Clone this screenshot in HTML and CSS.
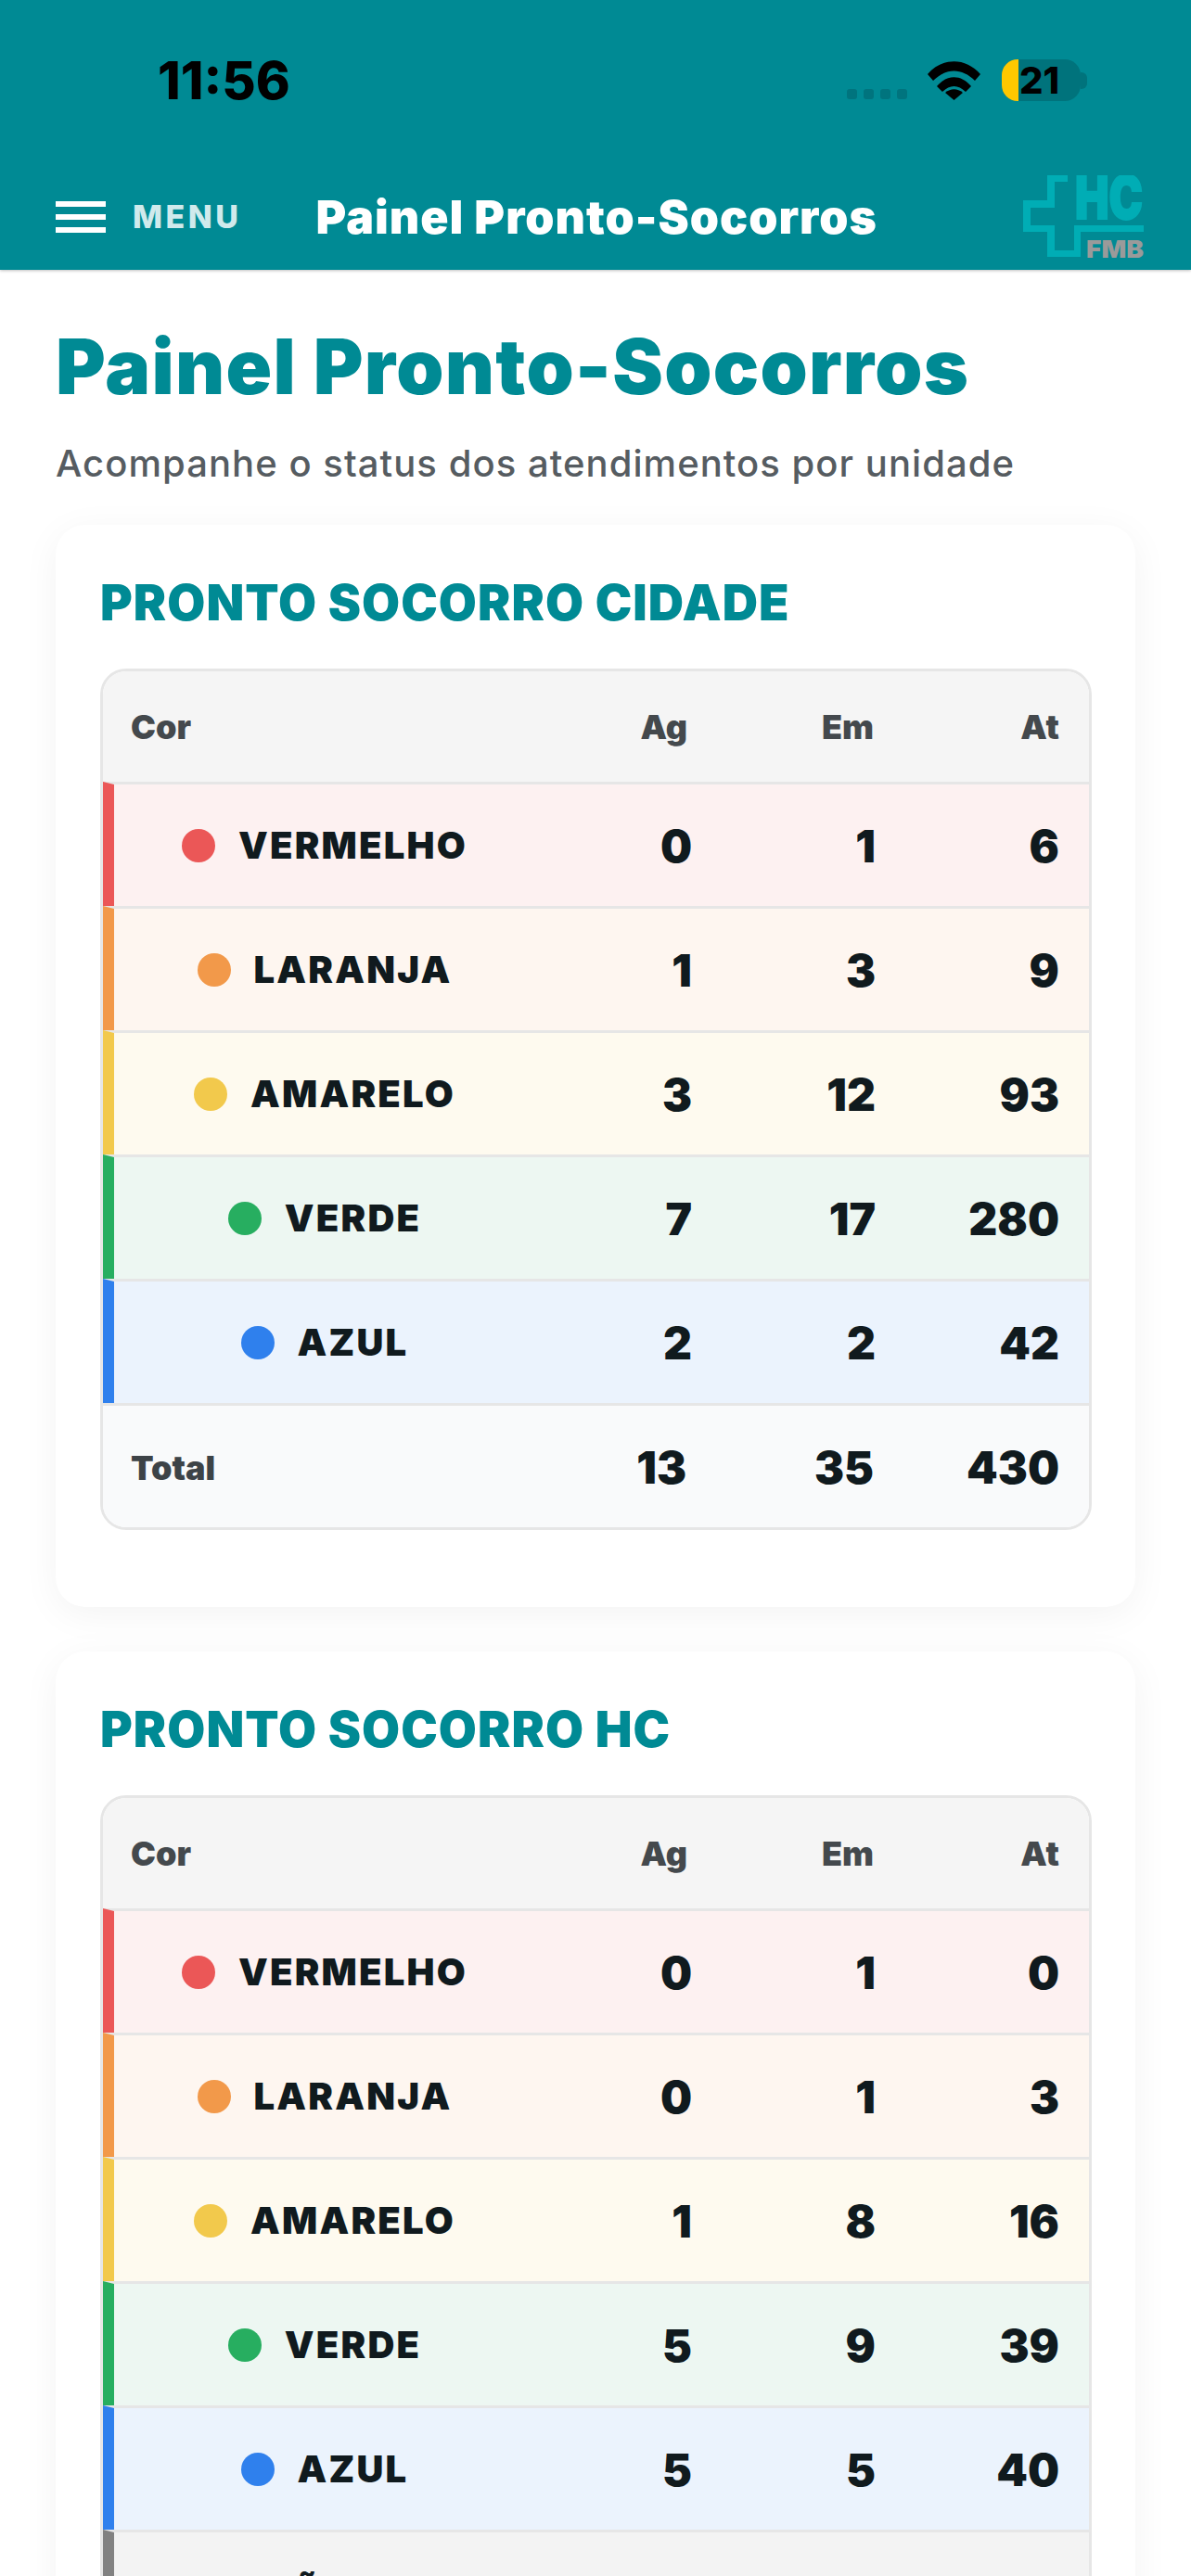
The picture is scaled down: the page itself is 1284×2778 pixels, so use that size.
FILE: index.html
```html
<!DOCTYPE html>
<html lang="pt-BR">
<head>
    <meta charset="UTF-8">
    <meta name="viewport" content="width=device-width, initial-scale=1.0">
    <title>Painel Pronto-Socorros</title>
    <link rel="stylesheet" href="styles.css">
</head>
<body>
    <header class="topo">
        <div class="status">
            <span class="hora">11:56</span>
            <div class="status-icones">
                <div class="sinal"><i></i><i></i><i></i><i></i></div>
                <svg class="wifi" viewBox="0 0 57 42" width="57" height="42">
                    <path d="M0 14C16-4.5 41-4.5 57 14L51 21C37 7 20 7 6 21Z"/>
                    <path d="M10 27C21 14 36 14 47 27L41 33C33 25 24 25 16 33Z"/>
                    <path d="M19 34C25 29 32 29 38 34L28.5 42Z"/>
                </svg>
                <div class="bateria"><span class="carga"></span><span class="nivel">21</span></div>
                <span class="bateria-ponta"></span>
            </div>
        </div>
        <nav class="barra">
            <div class="hamburguer"><i></i><i></i><i></i></div>
            <span class="menu">MENU</span>
            <span class="barra-titulo">Painel Pronto-Socorros</span>
            <svg class="logo" viewBox="0 0 130 90" width="130" height="90">
                <polygon class="logo-cruz" points="48,0 26,0 26,27 0,27 0,61 26,61 26,88 62,88 62,61 130,61 130,54 55,54 55,81 34,81 34,54 8,54 8,35 34,35 34,7 48,7"/>
                <text class="logo-hc" x="56" y="47" textLength="73" lengthAdjust="spacingAndGlyphs">HC</text>
                <text class="logo-fmb" x="68" y="89" textLength="62" lengthAdjust="spacingAndGlyphs">FMB</text>
            </svg>
        </nav>
    </header>

    <main class="conteudo">
        <h1>Painel Pronto-Socorros</h1>
        <p class="subtitulo">Acompanhe o status dos atendimentos por unidade</p>

        <section class="card">
            <h2>PRONTO SOCORRO CIDADE</h2>
            <div class="tabela">
                <table>
                    <thead>
                        <tr><th>Cor</th><th>Ag</th><th>Em</th><th>At</th></tr>
                    </thead>
                    <tbody>
                        <tr class="vermelho"><td><span class="cor"><i></i>VERMELHO</span></td><td>0</td><td>1</td><td>6</td></tr>
                        <tr class="laranja"><td><span class="cor"><i></i>LARANJA</span></td><td>1</td><td>3</td><td>9</td></tr>
                        <tr class="amarelo"><td><span class="cor"><i></i>AMARELO</span></td><td>3</td><td>12</td><td>93</td></tr>
                        <tr class="verde"><td><span class="cor"><i></i>VERDE</span></td><td>7</td><td>17</td><td>280</td></tr>
                        <tr class="azul"><td><span class="cor"><i></i>AZUL</span></td><td>2</td><td>2</td><td>42</td></tr>
                        <tr class="total"><td>Total</td><td>13</td><td>35</td><td>430</td></tr>
                    </tbody>
                </table>
            </div>
        </section>

        <section class="card">
            <h2>PRONTO SOCORRO HC</h2>
            <div class="tabela">
                <table>
                    <thead>
                        <tr><th>Cor</th><th>Ag</th><th>Em</th><th>At</th></tr>
                    </thead>
                    <tbody>
                        <tr class="vermelho"><td><span class="cor"><i></i>VERMELHO</span></td><td>0</td><td>1</td><td>0</td></tr>
                        <tr class="laranja"><td><span class="cor"><i></i>LARANJA</span></td><td>0</td><td>1</td><td>3</td></tr>
                        <tr class="amarelo"><td><span class="cor"><i></i>AMARELO</span></td><td>1</td><td>8</td><td>16</td></tr>
                        <tr class="verde"><td><span class="cor"><i></i>VERDE</span></td><td>5</td><td>9</td><td>39</td></tr>
                        <tr class="azul"><td><span class="cor"><i></i>AZUL</span></td><td>5</td><td>5</td><td>40</td></tr>
                        <tr class="cinza"><td><span class="cor"><i></i>NÃO INF.</span></td><td>0</td><td>0</td><td>0</td></tr>
                    </tbody>
                </table>
            </div>
        </section>
    </main>
</body>
</html>
```

FILE: styles.css
```css
html, body {
    margin: 0;
    padding: 0;
    height: 2778px;
    overflow: hidden;
}
body {
    font-family: 'Inter', 'Liberation Sans', sans-serif;
    background-color: #fff;
    color: #101a1e;
}

/* topo */
.topo {
    background-color: #008a94;
    height: 291px;
    box-shadow: 0 1px 3px rgba(0, 0, 0, 0.25);
}
.status {
    height: 176px;
    display: flex;
    align-items: center;
    justify-content: space-between;
    padding: 0 112px 0 170px;
}
.hora {
    font-size: 56px;
    font-weight: 800;
    color: #000;
    line-height: 1;
    margin-top: -3px;
}
.status-icones {
    display: flex;
    align-items: flex-end;
    margin-top: -4px;
}
.sinal {
    display: flex;
    gap: 7px;
    margin-right: 22px;
    padding-bottom: 2px;
}
.sinal i {
    width: 11px;
    height: 11px;
    border-radius: 3px;
    background-color: #00747e;
}
.wifi {
    margin-right: 23px;
    margin-bottom: 1px;
}
.bateria {
    width: 85px;
    height: 45px;
    border-radius: 17px;
    background-color: #00737c;
    overflow: hidden;
    display: flex;
    align-items: center;
}
.carga {
    width: 18px;
    height: 100%;
    background-color: #ffc800;
}
.nivel {
    font-size: 40px;
    font-weight: 800;
    color: #000;
    margin-left: 1px;
}
.bateria-ponta {
    width: 7px;
    height: 18px;
    margin-bottom: 13px;
    border-radius: 0 6px 6px 0;
    background-color: #00737c;
}
.barra {
    height: 115px;
    display: flex;
    align-items: center;
    padding: 0 51px 0 60px;
}
.hamburguer {
    display: flex;
    flex-direction: column;
    gap: 8px;
    width: 54px;
}
.hamburguer i {
    height: 6px;
    background-color: #fff;
}
.menu {
    margin-left: 29px;
    font-size: 34px;
    font-weight: 800;
    letter-spacing: 3.5px;
    color: #d0eaec;
}
.barra-titulo {
    margin-left: 80px;
    font-size: 50px;
    font-weight: 900;
    letter-spacing: 1px;
    color: #fff;
}
.logo {
    margin-left: auto;
}
.logo-cruz {
    fill: #00adb5;
}
.logo-hc {
    font-size: 64px;
    font-weight: 900;
    fill: #00adb5;
    stroke: #00adb5;
    stroke-width: 2px;
}
.logo-fmb {
    font-size: 26px;
    font-weight: 900;
    fill: #9a9a9a;
}

/* conteudo */
.conteudo {
    padding: 57px 60px 0;
}
h1 {
    margin: 0 0 30px;
    font-size: 82px;
    line-height: 96px;
    font-weight: 900;
    letter-spacing: 1.3px;
    color: #008a94;
}
.subtitulo {
    margin: 0 0 40px;
    font-size: 40px;
    line-height: 52px;
    font-weight: 500;
    letter-spacing: 1.05px;
    color: #565c61;
}
.card {
    background-color: #fff;
    border-radius: 32px;
    box-shadow: 0 8px 40px rgba(0, 0, 0, 0.05);
    padding: 52px 47px 83px 48px;
    margin-bottom: 48px;
}
h2 {
    margin: 0 0 39px;
    font-size: 53px;
    line-height: 64px;
    font-weight: 900;
    letter-spacing: 1.05px;
    color: #008a94;
}

/* tabela */
.tabela {
    border: 3px solid #e6e6e6;
    border-radius: 28px;
    overflow: hidden;
}
table {
    width: 100%;
    table-layout: fixed;
    border-collapse: separate;
    border-spacing: 0;
}
th, td {
    box-sizing: border-box;
    padding: 0 32px 0 0;
    text-align: right;
}
th:first-child, td:first-child {
    width: 466px;
    padding: 0 0 0 30px;
    text-align: left;
}
th:nth-child(2), td:nth-child(2) {
    width: 195px;
}
th:nth-child(3), td:nth-child(3) {
    width: 202px;
}
th:nth-child(2) {
    padding-right: 31px;
}
th {
    height: 119px;
    background-color: #f5f5f5;
    font-size: 36px;
    font-weight: 900;
    color: #44494d;
}
td {
    height: 134px;
    padding-top: 2px;
    border-top: 3px solid #e6e6e6;
    font-size: 48px;
    font-weight: 900;
}
tbody td:first-child {
    border-left: 12px solid #828282;
    padding: 2px 0 0 0;
    text-align: center;
}
tbody td:nth-child(2) {
    padding-right: 26px;
}
tbody td:nth-child(3) {
    padding-right: 30px;
}
.cor {
    display: inline-flex;
    align-items: center;
    gap: 25px;
    font-size: 40px;
    letter-spacing: 2.2px;
    line-height: 1;
}
.cor i {
    width: 36px;
    height: 36px;
    border-radius: 50%;
    background-color: #828282;
}
.vermelho td { background-color: #fdf1f1; }
.vermelho td:first-child { border-left-color: #eb5757; }
.vermelho i { background-color: #eb5757; }
.laranja td { background-color: #fef6f0; }
.laranja td:first-child { border-left-color: #f2994a; }
.laranja i { background-color: #f2994a; }
.amarelo td { background-color: #fefaef; }
.amarelo td:first-child { border-left-color: #f2c94c; }
.amarelo i { background-color: #f2c94c; }
.verde td { background-color: #edf7f2; }
.verde td:first-child { border-left-color: #27ae60; }
.verde i { background-color: #27ae60; }
.azul td { background-color: #ebf3fd; }
.azul td:first-child { border-left-color: #2f80ed; }
.azul i { background-color: #2f80ed; }
.cinza td { background-color: #f3f3f3; }
.total td {
    background-color: #f9fafb;
}
.total td:first-child {
    border-left: 0;
    padding-left: 30px;
    text-align: left;
    font-size: 36px;
    font-weight: 900;
    color: #3d4347;
}
.total td:nth-child(2), .total td:nth-child(3) {
    padding-right: 32px;
}
```
